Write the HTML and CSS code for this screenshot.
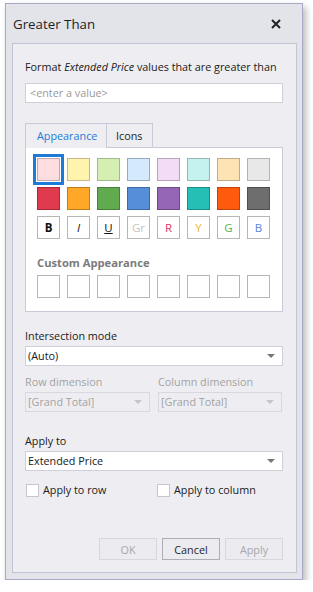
FILE: index.html
```html
<!DOCTYPE html>
<html>
<head>
<meta charset="utf-8">
<link rel="stylesheet" href="styles.css">
</head>
<body>
<div class="window">
  <div class="titlebar">
    <span class="title">Greater Than</span>
    <svg class="close" width="10" height="10" viewBox="0 0 10 10"><path d="M1 1L9 9M9 1L1 9" stroke="#222" stroke-width="2" fill="none"/></svg>
  </div>
  <div class="panel">
    <div class="prompt">Format <i>Extended Price</i> values that are greater than</div>
    <div class="input placeholder">&lt;enter a value&gt;</div>

    <div class="tabs">
      <div class="tab-headers">
        <div class="tab active">Appearance</div>
        <div class="tab">Icons</div>
        <div class="tab-rest"></div>
      </div>
      <div class="tab-page">
        <div class="grid">
          <div class="sw selected c1"></div>
          <div class="sw c2"></div>
          <div class="sw c3"></div>
          <div class="sw c4"></div>
          <div class="sw c5"></div>
          <div class="sw c6"></div>
          <div class="sw c7"></div>
          <div class="sw c8"></div>
          <div class="sw d1"></div>
          <div class="sw d2"></div>
          <div class="sw d3"></div>
          <div class="sw d4"></div>
          <div class="sw d5"></div>
          <div class="sw d6"></div>
          <div class="sw d7"></div>
          <div class="sw d8"></div>
          <div class="sw txt t-b">B</div>
          <div class="sw txt t-i">I</div>
          <div class="sw txt t-u">U</div>
          <div class="sw txt t-gr">Gr</div>
          <div class="sw txt t-r">R</div>
          <div class="sw txt t-y">Y</div>
          <div class="sw txt t-g">G</div>
          <div class="sw txt t-bl">B</div>
        </div>
        <div class="custom-title">Custom Appearance</div>
        <div class="grid">
          <div class="sw empty"></div>
          <div class="sw empty"></div>
          <div class="sw empty"></div>
          <div class="sw empty"></div>
          <div class="sw empty"></div>
          <div class="sw empty"></div>
          <div class="sw empty"></div>
          <div class="sw empty"></div>
        </div>
      </div>
    </div>

    <div class="label first">Intersection mode</div>
    <div class="combo"><span>(Auto)</span><span class="arrow"></span></div>

    <div class="two-col">
      <div class="col">
        <div class="label disabled">Row dimension</div>
        <div class="combo disabled"><span>[Grand Total]</span><span class="arrow"></span></div>
      </div>
      <div class="col">
        <div class="label disabled">Column dimension</div>
        <div class="combo disabled"><span>[Grand Total]</span><span class="arrow"></span></div>
      </div>
    </div>

    <div class="label apply">Apply to</div>
    <div class="combo"><span>Extended Price</span><span class="arrow"></span></div>

    <div class="checks">
      <label class="check"><span class="box"></span>Apply to row</label>
      <label class="check"><span class="box"></span>Apply to column</label>
    </div>

    <div class="buttons">
      <div class="btn disabled">OK</div>
      <div class="btn">Cancel</div>
      <div class="btn disabled">Apply</div>
    </div>
  </div>
</div>
</body>
</html>
```

FILE: styles.css
```css
* { box-sizing: border-box; }
html, body { margin: 0; padding: 0; background: #ffffff; }
body {
  font-family: "Open Sans", "Noto Sans", sans-serif;
  font-size: 10.8px;
  color: #202020;
  padding: 3px 0 0 5px;
}
.window {
  width: 298px;
  height: 577px;
  background: #e3e3ea;
  border: 1px solid #a9a9c6;
  box-shadow: 3px 4px 7px rgba(0, 0, 0, 0.28);
  display: flex;
  flex-direction: column;
}
.titlebar {
  height: 39px;
  display: flex;
  align-items: center;
  justify-content: space-between;
  padding: 0 21px 0 7px;
}
.title {
  font-size: 13.3px;
  color: #1e1e1e;
  margin-top: 1px;
}
.close { display: block; margin-top: 1px; }
.panel {
  flex: 1;
  margin: 0 5px 6px 6px;
  background: #eeeef2;
  border: 1px solid #c3c3d6;
  padding: 15px 13px 0 12px;
  display: flex;
  flex-direction: column;
}
.prompt { line-height: 16px; }
.prompt i { font-style: italic; }
.input {
  margin-top: 8px;
  height: 20px;
  background: #fff;
  border: 1px solid #cfcfd9;
  padding: 0 4px;
  line-height: 18px;
}
.placeholder { color: #9a9a9a; }

.tabs { margin-top: 20px; }
.tab-headers { display: flex; height: 25px; }
.tab {
  border: 1px solid #c9c9d8;
  border-bottom: none;
  padding: 0 9px;
  line-height: 23px;
  background: #eeeef2;
}
.tab.active {
  color: #1b7bd6;
  width: 82px;
  padding: 0 0 0 11px;
}
.tab + .tab {
  border-left: none;
  border-bottom: 1px solid #c9c9d8;
  width: 46px;
}
.tab-rest { flex: 1; border-bottom: 1px solid #c9c9d8; }
.tab-page {
  background: #fff;
  border: 1px solid #c9c9d8;
  border-top: none;
  padding: 10px 11px 12px 11px;
  height: 164px;
}
.grid {
  display: grid;
  grid-template-columns: repeat(8, 23px);
  grid-auto-rows: 23px;
  column-gap: 7px;
  row-gap: 6px;
}
.sw {
  border: 1px solid #b6b6b6;
  background: #fff;
}
.sw.selected {
  outline: 3px solid #1b7bd6;
  outline-offset: 1px;
}
.c1 { background: #fedde1; border-color: #bfa9ac; }
.c2 { background: #fff4ae; border-color: #c7b98a; }
.c3 { background: #d5eeb2; border-color: #a2b98c; }
.c4 { background: #d5e9fc; border-color: #98aabf; }
.c5 { background: #f3dcf6; border-color: #b7a3ba; }
.c6 { background: #c4f2ef; border-color: #94b7b4; }
.c7 { background: #fee3b4; border-color: #c0ab88; }
.c8 { background: #e8e8e8; border-color: #b3b3b3; }
.d1 { background: #e03a4e; border-color: #a82a39; }
.d2 { background: #ffa726; border-color: #bf7d1c; }
.d3 { background: #62aa50; border-color: #487e3a; }
.d4 { background: #568ed9; border-color: #3f69a2; }
.d5 { background: #9566b5; border-color: #6e4b86; }
.d6 { background: #25bfb6; border-color: #1b8e87; }
.d7 { background: #ff5a0e; border-color: #bf430a; }
.d8 { background: #6e6e6e; border-color: #4f4f4f; }
.txt {
  display: flex;
  align-items: center;
  justify-content: center;
  font-size: 11.5px;
}
.t-b { font-weight: bold; color: #111; }
.t-i { font-style: italic; color: #111; }
.t-u { text-decoration: underline; color: #111; }
.t-gr { color: #c4c4c4; }
.t-r { color: #e2386a; }
.t-y { color: #f5b531; }
.t-g { color: #5bb14a; }
.t-bl { color: #5487dd; }
.custom-title {
  margin-top: 15px;
  margin-bottom: 4px;
  line-height: 17px;
  font-weight: bold;
  color: #7b7b7b;
  font-size: 11.2px;
}

.label { line-height: 16px; }
.label.first { margin-top: 16px; }
.label.disabled { color: #a2a2a2; margin-top: 8px; }
.label.apply { margin-top: 21px; }
.combo {
  margin-top: 2px;
  height: 20px;
  background: #fff;
  border: 1px solid #cfcfd9;
  padding: 0 7px 0 2px;
  line-height: 18px;
  display: flex;
  justify-content: space-between;
  align-items: center;
}
.combo.disabled {
  background: #eeeef2;
  border-color: #d8d8e0;
  color: #a2a2a2;
}
.arrow {
  width: 0;
  height: 0;
  border-left: 4px solid transparent;
  border-right: 4px solid transparent;
  border-top: 4px solid #777;
}
.combo.disabled .arrow { border-top-color: #c4c4c4; }
.two-col {
  display: grid;
  grid-template-columns: 125px 124px;
  column-gap: 8px;
}
.checks {
  margin-top: 11px;
  display: grid;
  grid-template-columns: 131px 1fr;
  padding-left: 1px;
}
.check {
  display: flex;
  align-items: center;
  line-height: 16px;
}
.box {
  width: 13px;
  height: 13px;
  background: #fff;
  border: 1px solid #c6c6d0;
  margin-right: 4px;
}
.buttons {
  margin-top: auto;
  margin-bottom: 12px;
  display: flex;
  justify-content: flex-end;
  gap: 5px;
}
.btn {
  width: 58px;
  height: 22px;
  border: 1px solid #adadb6;
  background: #ebebf0;
  display: flex;
  align-items: center;
  justify-content: center;
  color: #1e1e1e;
}
.btn.disabled {
  border-color: #d7d7df;
  color: #a8a8a8;
}
```
